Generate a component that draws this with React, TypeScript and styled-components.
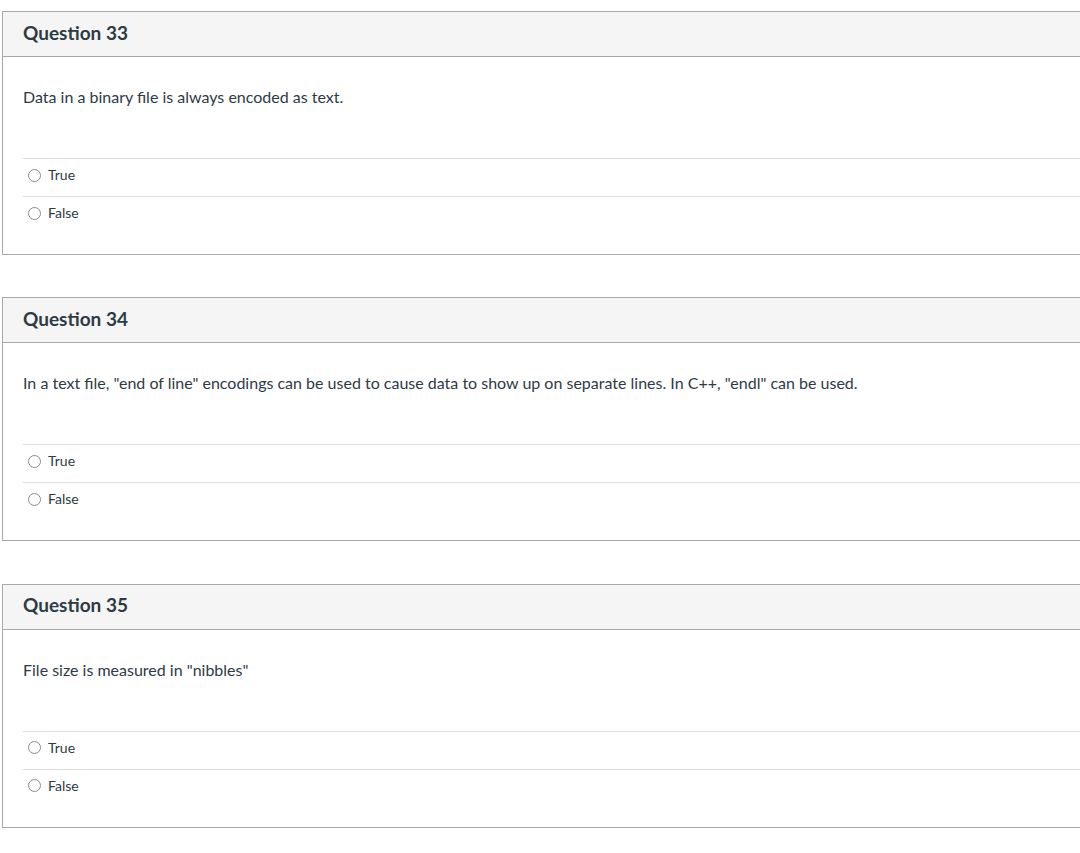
import React from "react";
import styled, { createGlobalStyle } from "styled-components";

const Global = createGlobalStyle`
  html, body { margin: 0; padding: 0; background: #ffffff; overflow: hidden; }
  body { font-family: Lato, "Open Sans", "Liberation Sans", sans-serif; color: #2d3b45; }
`;

const Page = styled.div`
  padding: 11px 0 0 2px;
  width: 1100px;
`;

const Card = styled.section`
  border: 1px solid #a9a9a9;
  margin-bottom: 42.4px;
  background: #fff;
`;

const Header = styled.header`
  box-sizing: border-box;
  background: #f5f5f5;
  border-bottom: 1px solid #a9a9a9;
  display: flex;
  align-items: center;
  padding: 0 20px 3px 20px;
  height: 45px;
`;

const Title = styled.h2`
  margin: 0;
  font-size: 19px;
  font-weight: 700;
  color: #2d3b45;
  line-height: 22px;
`;

const Body = styled.div`
  padding: 29px 0 20px 20px;
`;

const Prompt = styled.p`
  margin: 0;
  font-size: 16px;
  line-height: 22px;
  color: #2d3b45;
`;

const Answers = styled.ul`
  list-style: none;
  margin: 50px 0 0 0;
  padding: 0;
`;

const Answer = styled.li`
  border-top: 1px solid #dddddd;
  padding: 0 0 5px 5px;
  box-sizing: content-box;
  display: flex;
  align-items: center;
  gap: 7px;
  height: 32px;
`;

const Radio = styled.span`
  width: 11px;
  height: 11px;
  border: 1px solid #8a8a8a;
  border-radius: 50%;
  background: #fff;
  flex: none;
`;

const Label = styled.span`
  font-size: 14px;
  line-height: 16px;
  color: #2d3b45;
`;

const questions = [
  { n: 33, text: "Data in a binary file is always encoded as text." },
  {
    n: 34,
    text: 'In a text file, "end of line" encodings can be used to cause data to show up on separate lines. In C++, "endl" can be used.',
  },
  { n: 35, text: 'File size is measured in "nibbles"' },
];

export default function App() {
  return (
    <>
      <Global />
      <Page>
        {questions.map((q) => (
          <Card key={q.n}>
            <Header>
              <Title>Question {q.n}</Title>
            </Header>
            <Body>
              <Prompt>{q.text}</Prompt>
              <Answers>
                {["True", "False"].map((a) => (
                  <Answer key={a}>
                    <Radio />
                    <Label>{a}</Label>
                  </Answer>
                ))}
              </Answers>
            </Body>
          </Card>
        ))}
      </Page>
    </>
  );
}
